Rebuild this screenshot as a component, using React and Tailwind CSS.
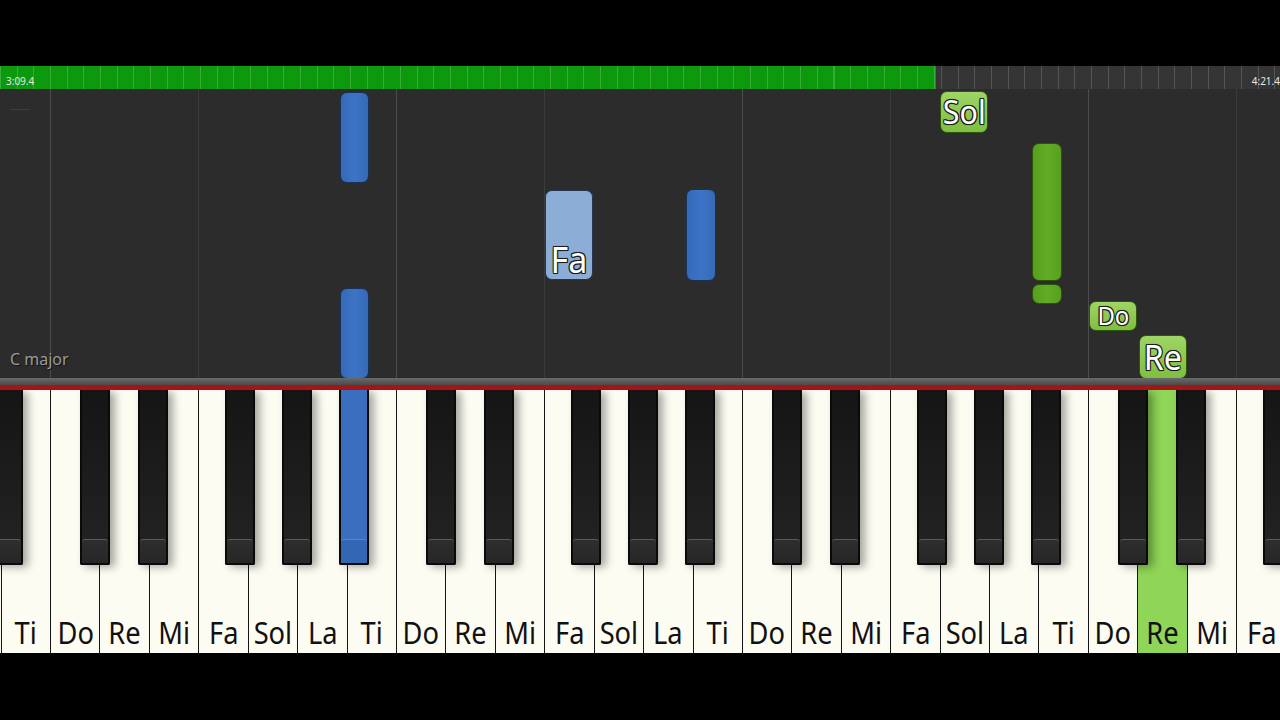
import React from "react";

const W = 49.43;
const X0 = 0.6;
const NAMES = ["Ti", "Do", "Re", "Mi", "Fa", "Sol", "La"];
const whites = Array.from({ length: 26 }, (_, i) => NAMES[i % 7]);

const blackOffsets = [45, 103, 190, 247, 304];
const blacks = [];
for (let o = -1; o <= 3; o++) {
  const c = X0 + (1 + 7 * o) * W;
  blackOffsets.forEach((off, j) => {
    const center = c + off;
    if (center > -20 && center < 1300) {
      blacks.push({ left: center - 15, pressed: o === 0 && j === 4 });
    }
  });
}

const gridLines = [];
for (let o = 0; o <= 3; o++) {
  const c = X0 + (1 + 7 * o) * W;
  gridLines.push({ left: c - 0.5, major: true });
  gridLines.push({ left: c + 3 * W - 0.5, major: false });
}

const outline =
  "[text-shadow:0_0_2px_#111,1px_1px_0_#222,-1px_-1px_0_#222,1px_-1px_0_#222,-1px_1px_0_#222,0_1px_0_#222,0_-1px_0_#222,1px_0_0_#222,-1px_0_0_#222]";

function Note({ left, top, w, h, kind, label, size, align = "center" }) {
  const cls =
    kind === "blue"
      ? "bg-gradient-to-r from-[#3669b8] via-[#3d74c6] to-[#3669b8] border-[#1b3257]"
      : kind === "lightblue"
      ? "bg-[#8cadd6] border-[#27364f]"
      : kind === "darkgreen"
      ? "bg-gradient-to-r from-[#56a01e] via-[#62ab26] to-[#56a01e] border-[#2c540c]"
      : "bg-gradient-to-b from-[#9ed564] to-[#7fbf40] border-[#2f560d]";
  return (
    <div
      className={`absolute rounded-[7px] border-[1.5px] ${cls} flex justify-center overflow-visible ${
        align === "bottom" ? "items-end" : "items-center"
      }`}
      style={{ left, top, width: w, height: h }}
    >
      {label && (
        <span
          className={`inline-block text-white leading-none scale-x-[0.92] ${outline}`}
          style={{ fontSize: size, marginBottom: 2 }}
        >
          {label}
        </span>
      )}
    </div>
  );
}

export default function App() {
  return (
    <div className="w-[1280px] h-[720px] bg-black overflow-hidden flex flex-col font-['Noto_Sans',sans-serif]">
      <div className="h-[66px] shrink-0 bg-black" />
      {/* progress bar */}
      <div className="h-[23px] shrink-0 relative flex">
        <div className="w-[936px] h-full bg-[#0d990d] bg-[repeating-linear-gradient(90deg,rgba(255,255,255,0.18)_0px,rgba(255,255,255,0.18)_1px,transparent_1px,transparent_16.67px)]" />
        <div className="flex-1 h-full bg-[#353535] bg-[repeating-linear-gradient(90deg,transparent_0px,transparent_5px,rgba(255,255,255,0.16)_5px,rgba(255,255,255,0.16)_6px,transparent_6px,transparent_16.67px)]" />
        <span className="absolute left-[6px] top-[10px] text-[10px] leading-none text-[#e6e6e6]">3:09.4</span>
        <span className="absolute right-[0px] top-[10px] text-[10px] leading-none text-[#e6e6e6]">4:21.4</span>
      </div>
      {/* note area */}
      <div className="h-[289px] shrink-0 relative bg-[#2c2c2c] overflow-hidden">
        {gridLines.map((g, i) => (
          <div
            key={i}
            className={`absolute top-0 bottom-0 w-px ${g.major ? "bg-[#4c4c4c]" : "bg-[#3b3b3b]"}`}
            style={{ left: g.left }}
          />
        ))}
        <div className="absolute left-[10px] top-[20px] w-[20px] h-px bg-[#3e3e3e]" />
        <span className="absolute left-[10px] top-[262px] text-[16px] leading-none text-[#9a9a9a] [text-shadow:1px_1px_1px_#111]">
          C major
        </span>
        <Note left={340} top={3} w={29} h={91} kind="blue" />
        <Note left={340} top={199} w={29} h={91} kind="blue" />
        <Note left={545} top={101} w={48} h={90} kind="lightblue" label="Fa" size={37} align="bottom" />
        <Note left={686} top={100} w={30} h={92} kind="blue" />
        <Note left={940} top={2} w={48} h={42} kind="green" label="Sol" size={33} />
        <Note left={1032} top={54} w={30} h={138} kind="darkgreen" />
        <Note left={1032} top={195} w={30} h={20} kind="darkgreen" />
        <Note left={1089} top={212} w={48} h={30} kind="green" label="Do" size={26} />
        <Note left={1139} top={246} w={48} h={44} kind="green" label="Re" size={35} />
      </div>
      {/* separators */}
      <div className="h-[7px] shrink-0 bg-gradient-to-b from-[#6a6a6a] to-[#4a4a4a]" />
      <div className="h-[5px] shrink-0 bg-[#a51515]" />
      {/* keyboard */}
      <div className="h-[263px] shrink-0 relative overflow-hidden bg-[#fdfcf2]">
        <div className="absolute inset-0 flex pl-[0.6px]">
          {whites.map((n, i) => {
            const pressed = i === 23;
            return (
              <div
                key={i}
                className={`w-[49.43px] shrink-0 h-full border-l-[1.5px] border-[#151515] flex items-end justify-center pb-[5px] ${
                  pressed ? "bg-[#8fd557]" : "bg-[#fdfcf2]"
                } ${i === 0 ? "border-l-0" : ""}`}
              >
                <span className="inline-block text-[31px] leading-none text-[#111] scale-x-[0.88]">{n}</span>
              </div>
            );
          })}
        </div>
        {blacks.map((b, i) => (
          <div
            key={i}
            className={`absolute top-0 w-[30px] h-[175px] border-2 border-t-0 border-[#0a0a0a] rounded-b-[2px] flex flex-col shadow-[5px_2px_8px_rgba(0,0,0,0.35)] ${
              b.pressed ? "bg-[#3a6fc0]" : "bg-gradient-to-b from-[#151515] to-[#242424]"
            }`}
            style={{ left: b.left }}
          >
            <div className="flex-1" />
            <div
              className={`h-[24px] border-t rounded-t-[3px] ${
                b.pressed ? "bg-[#3366b3] border-[#5585cf]" : "bg-gradient-to-b from-[#2e2e2e] to-[#262626] border-[#5a5a5a]"
              }`}
            />
          </div>
        ))}
      </div>
      <div className="flex-1 bg-black" />
    </div>
  );
}
